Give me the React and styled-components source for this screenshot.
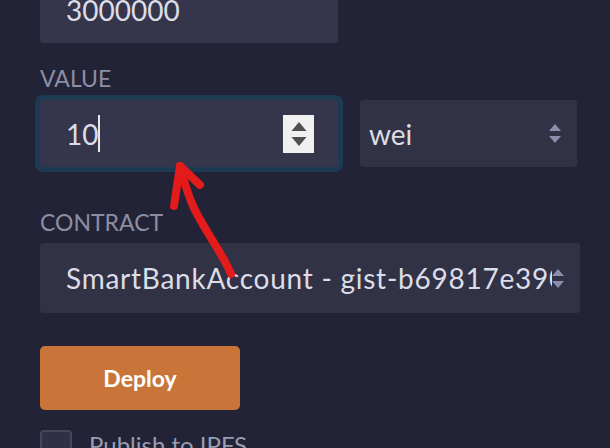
import React from "react";
import styled, { createGlobalStyle } from "styled-components";

const GlobalStyle = createGlobalStyle`
  html, body {
    margin: 0;
    padding: 0;
    background: #222336;
    overflow: hidden;
  }
  body {
    font-family: Lato, "Noto Sans", sans-serif;
  }
`;

const Page = styled.div`
  position: relative;
  width: 610px;
  height: 448px;
  overflow: hidden;
  background: #222336;
`;

const Panel = styled.div`
  display: flex;
  flex-direction: column;
  padding-left: 40px;
  margin-top: -24px;
`;

const Label = styled.div`
  font-size: 23px;
  line-height: 28px;
  color: #8c8ea3;
  text-transform: uppercase;
  margin-top: ${p => p.$top}px;
  margin-bottom: ${p => p.$bottom}px;
`;

const Row = styled.div`
  display: flex;
  align-items: center;
  gap: 22px;
`;

const Input = styled.div`
  box-sizing: border-box;
  width: 298px;
  height: 67px;
  display: flex;
  align-items: center;
  padding: 0 24px 0 26px;
  background: #35364b;
  border-radius: 3px;
  color: #dcdde7;
  font-size: 28px;
  box-shadow: ${p => (p.$focus ? "0 0 0 5px #1c3a51" : "none")};
`;

const Value = styled.span`
  flex: 1;
  display: flex;
  align-items: center;
`;

const Caret = styled.span`
  display: inline-block;
  width: 2px;
  height: 37px;
  background: #e6e6ee;
`;

const Spinner = styled.div`
  width: 31px;
  height: 38px;
  background: #f0f0f0;
  display: flex;
  flex-direction: column;
  align-items: center;
  justify-content: center;
  gap: 6px;
`;

const Select = styled.div`
  box-sizing: border-box;
  width: ${p => p.$width}px;
  height: ${p => p.$height}px;
  display: flex;
  align-items: center;
  padding: 0 ${p => p.$right}px 0 ${p => p.$left}px;
  background: #313246;
  border-radius: 3px;
  color: #dcdde7;
  font-size: 28px;
  letter-spacing: ${p => p.$spacing || 0}px;
`;

const SelectText = styled.span`
  flex: 1;
  white-space: nowrap;
  overflow: hidden;
`;

const Deploy = styled.button`
  width: 200px;
  height: 64px;
  margin-top: 33px;
  border: none;
  border-radius: 5px;
  background: #c97539;
  color: #ffffff;
  font-family: Lato, "Noto Sans", sans-serif;
  font-weight: 700;
  font-size: 23px;
  cursor: pointer;
`;

const CheckRow = styled.label`
  display: flex;
  align-items: flex-start;
  gap: 17px;
  margin-top: 20px;
  color: #9a9cb3;
  font-size: 24px;
  line-height: 30px;
`;

const Box = styled.span`
  box-sizing: border-box;
  width: 32px;
  height: 32px;
  border: 2px solid #45465c;
  border-radius: 4px;
  background: #2f3045;
`;

const Overlay = styled.svg`
  position: absolute;
  left: 0;
  top: 0;
  pointer-events: none;
`;

const ArrowStack = styled.div`
  display: flex;
  flex-direction: column;
  gap: 3px;
`;

const Triangle = ({ up, color, w, h }) => (
  <svg width={w} height={h} viewBox="0 0 10 6">
    <polygon points={up ? "0,6 10,6 5,0" : "0,0 10,0 5,6"} fill={color} />
  </svg>
);

const Arrows = ({ color }) => (
  <ArrowStack>
    <Triangle up color={color} w={12} h={9} />
    <Triangle color={color} w={12} h={9} />
  </ArrowStack>
);

export default function App() {
  return (
    <Page>
      <GlobalStyle />
      <Panel>
        <Input>
          <Value>3000000</Value>
        </Input>

        <Label $top={21} $bottom={8}>Value</Label>
        <Row>
          <Input $focus>
            <Value>
              10<Caret />
            </Value>
            <Spinner>
              <Triangle up color="#4f4f4f" w={16} h={9} />
              <Triangle color="#4f4f4f" w={16} h={9} />
            </Spinner>
          </Input>
          <Select $width={217} $height={67} $left={9} $right={16}>
            <SelectText>wei</SelectText>
            <Arrows color="#8b8dab" />
          </Select>
        </Row>

        <Label $top={41} $bottom={7}>Contract</Label>
        <Select $width={540} $height={70} $left={26} $right={16} $spacing={0.75}>
          <SelectText>SmartBankAccount - gist-b69817e390cc</SelectText>
          <Arrows color="#8b8dab" />
        </Select>

        <Deploy>Deploy</Deploy>

        <CheckRow>
          <Box />
          Publish to IPFS
        </CheckRow>
      </Panel>

      <Overlay width="610" height="448">
        <g fill="none" stroke="#e31b1b" strokeWidth="8" strokeLinecap="round" strokeLinejoin="round">
          <path d="M231 274 C222 252 204 230 193 206 C187 192 183 178 180 166" />
          <path d="M174 206 L180 166 L200 185" />
        </g>
      </Overlay>
    </Page>
  );
}
